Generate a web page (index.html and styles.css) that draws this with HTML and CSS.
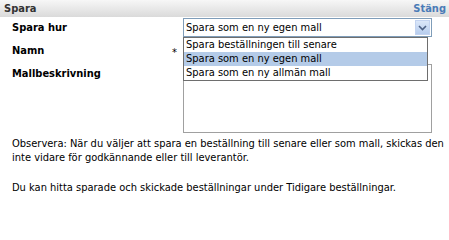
FILE: index.html
```html
<!DOCTYPE html>
<html lang="sv">
<head>
<meta charset="utf-8">
<title>Spara</title>
<link rel="stylesheet" href="styles.css">
</head>
<body>
<div class="panel">
  <div class="header">
    <span class="title">Spara</span>
    <a class="close" href="#">Stäng</a>
  </div>
  <div class="form">
    <div class="label">Spara hur</div>
    <div class="req"></div>
    <div class="control select-wrap">
      <div class="select">
        <span class="select-value">Spara som en ny egen mall</span>
        <span class="select-btn">
          <svg width="9" height="6" viewBox="0 0 9 6"><path d="M1 1 L4.5 4.5 L8 1" fill="none" stroke="#4d6185" stroke-width="1.6"/></svg>
        </span>
      </div>
      <ul class="dropdown">
        <li>Spara beställningen till senare</li>
        <li class="active">Spara som en ny egen mall</li>
        <li>Spara som en ny allmän mall</li>
      </ul>
    </div>

    <div class="label">Namn</div>
    <div class="req">*</div>
    <div class="control"><div class="input"></div></div>

    <div class="label label-top">Mallbeskrivning</div>
    <div class="req"></div>
    <div class="control"><div class="textarea"></div></div>
  </div>
  <div class="notes">
    <p>Observera: När du väljer att spara en beställning till senare eller som mall, skickas den inte vidare för godkännande eller till leverantör.</p>
    <p>Du kan hitta sparade och skickade beställningar under Tidigare beställningar.</p>
  </div>
</div>
</body>
</html>
```

FILE: styles.css
```css
html, body {
  margin: 0;
  padding: 0;
  background: #ffffff;
}

body {
  font-family: "DejaVu Sans Condensed", "DejaVu Sans", sans-serif;
  font-stretch: condensed;
  font-size: 11px;
  color: #000;
}

.panel {
  width: 449px;
}

.header {
  height: 17px;
  display: flex;
  align-items: center;
  justify-content: space-between;
  padding: 0 3px 0 4px;
  background: linear-gradient(#f7f7f7, #dadada);
}

.title {
  font-weight: bold;
  color: #333;
}

.close {
  font-weight: bold;
  color: #4a7bb7;
  text-decoration: none;
}

.form {
  display: grid;
  grid-template-columns: 158px 13px 249px;
  row-gap: 4px;
  padding: 1px 0 0 12px;
}

.label {
  font-weight: bold;
  display: flex;
  align-items: center;
}

.label-top {
  align-items: flex-start;
  padding-top: 3px;
}

.req {
  display: flex;
  align-items: center;
  padding-left: 2px;
  padding-top: 3px;
}

.select-wrap {
  position: relative;
}

.select {
  height: 17px;
  border: 1px solid #7f9db9;
  display: flex;
  align-items: center;
  justify-content: space-between;
  background: #fff;
}

.select-value {
  padding-left: 2px;
}

.select-btn {
  width: 15px;
  height: 15px;
  margin-right: 1px;
  display: flex;
  align-items: center;
  justify-content: center;
  background: linear-gradient(#dbe7f9, #b7cdee);
  border: 1px solid #c3d3f0;
  box-sizing: border-box;
}

.dropdown {
  position: absolute;
  top: 19px;
  left: 0;
  width: 243px;
  margin: 0;
  padding: 0;
  list-style: none;
  background: #fff;
  border: 1px solid #6e6e6e;
  z-index: 2;
}

.dropdown li {
  height: 14px;
  line-height: 14px;
  padding-left: 2px;
}

.dropdown li.active {
  background: #b4cbe8;
}

.input {
  width: 243px;
  height: 17px;
  border: 1px solid #a5acb5;
}

.textarea {
  height: 67px;
  border: 1px solid #a0a0a0;
}

.notes {
  padding: 4px 0 0 12px;
}

.notes p {
  margin: 0 0 16px 0;
  line-height: 14px;
}
```
